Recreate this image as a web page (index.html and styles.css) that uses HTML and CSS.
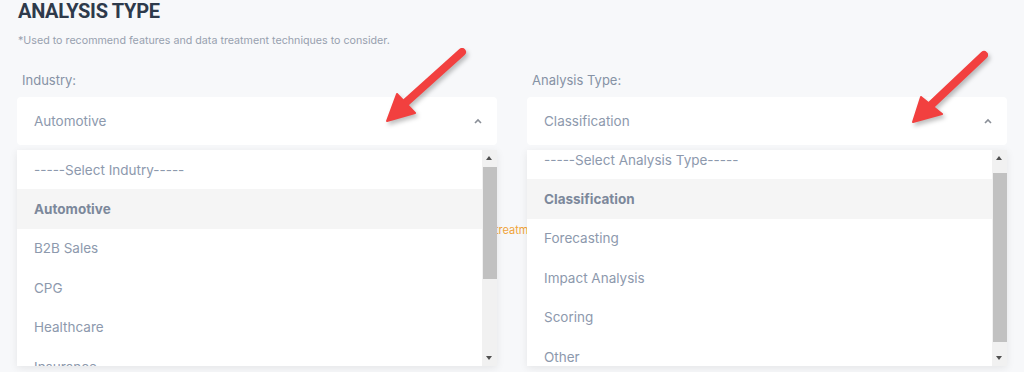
FILE: index.html
```html
<!DOCTYPE html>
<html>
<head>
  <meta charset="UTF-8">
  <title>Analysis Type</title>
  <link rel="stylesheet" href="styles.css">
</head>
<body>
  <section class="panel">
    <h2 class="panel-title">ANALYSIS TYPE</h2>
    <p class="hint">*Used to recommend features and data treatment techniques to consider.</p>

    <div class="fields">
      <div class="field">
        <label class="field-label">Industry:</label>
        <div class="select">
          <span>Automotive</span>
          <svg class="caret" width="8" height="6" viewBox="0 0 8 6"><path d="M1 5 L4 2 L7 5" fill="none" stroke="#8a8f98" stroke-width="1.6"/></svg>
        </div>
        <div class="menu">
          <ul class="options">
            <li>-----Select Indutry-----</li>
            <li class="selected">Automotive</li>
            <li>B2B Sales</li>
            <li>CPG</li>
            <li>Healthcare</li>
            <li>Insurance</li>
          </ul>
          <div class="scrollbar">
            <span class="arrow-up"></span>
            <span class="thumb thumb-industry"></span>
            <span class="arrow-down"></span>
          </div>
        </div>
      </div>

      <div class="field">
        <label class="field-label">Analysis Type:</label>
        <div class="select">
          <span>Classification</span>
          <svg class="caret" width="8" height="6" viewBox="0 0 8 6"><path d="M1 5 L4 2 L7 5" fill="none" stroke="#8a8f98" stroke-width="1.6"/></svg>
        </div>
        <div class="menu">
          <ul class="options scrolled">
            <li>-----Select Analysis Type-----</li>
            <li class="selected">Classification</li>
            <li>Forecasting</li>
            <li>Impact Analysis</li>
            <li>Scoring</li>
            <li>Other</li>
          </ul>
          <div class="scrollbar">
            <span class="arrow-up"></span>
            <span class="thumb thumb-type"></span>
            <span class="arrow-down"></span>
          </div>
        </div>
      </div>
    </div>

    <p class="note">treatment techniques will be suggested</p>

    <svg class="callouts" width="1024" height="372" viewBox="0 0 1024 372">
      <g fill="#f2403f" stroke="#f2403f">
        <line x1="462" y1="52" x2="403" y2="105" stroke-width="8" stroke-linecap="round"/>
        <polygon points="387,121 397,94 415,113" stroke-width="2" stroke-linejoin="round"/>
        <line x1="984" y1="55" x2="930" y2="106" stroke-width="8" stroke-linecap="round"/>
        <polygon points="913,122 921,97 942,114" stroke-width="2" stroke-linejoin="round"/>
      </g>
    </svg>
  </section>
</body>
</html>
```

FILE: styles.css
```css
body {
  margin: 0;
  background-color: #f7f8fa;
  font-family: "Inter", "Noto Sans", sans-serif;
  color: #8d99ad;
}
.panel {
  position: relative;
  height: 372px;
  overflow: hidden;
  padding: 0 17px;
}
.panel-title {
  margin: 0;
  padding-left: 1px;
  font-family: "Roboto", "Inter", sans-serif;
  font-size: 20px;
  line-height: 22px;
  font-weight: 700;
  letter-spacing: -0.3px;
  color: #2e3a4b;
}
.hint {
  margin: 12px 0 0 1px;
  font-size: 10.7px;
  line-height: 13px;
  color: #97a1af;
}
.fields {
  display: flex;
  gap: 30px;
  margin-top: 24px;
}
.field {
  position: relative;
  flex: 1;
}
.field-label {
  display: block;
  padding-left: 5px;
  font-size: 13px;
  line-height: 18px;
  color: #8692a5;
  margin-bottom: 8px;
}
.select {
  display: flex;
  align-items: center;
  justify-content: space-between;
  height: 48px;
  padding: 0 17px;
  background-color: #ffffff;
  border-radius: 4px;
  font-size: 13.5px;
  color: #8d99ad;
}
.caret {
  margin-right: -2px;
}
.menu {
  position: absolute;
  top: 100%;
  left: 0;
  right: 0;
  margin-top: 5px;
  height: 216px;
  display: flex;
  background-color: #ffffff;
  overflow: hidden;
  box-shadow: 0 2px 8px rgba(0, 0, 0, 0.08);
  z-index: 5;
}
.options {
  flex: 1;
  margin: 0;
  padding: 0;
  list-style: none;
}
.options.scrolled {
  margin-top: -10px;
}
.options li {
  height: 39.4px;
  display: flex;
  align-items: center;
  padding-left: 17px;
  font-size: 13.5px;
  color: #8d99ad;
}
.options li.selected {
  background-color: #f5f5f5;
  font-weight: 700;
  color: #7c889b;
}
.scrollbar {
  position: relative;
  width: 15px;
  background-color: #f1f1f1;
}
.arrow-up,
.arrow-down {
  position: absolute;
  left: 4px;
  width: 0;
  height: 0;
  border-left: 3.5px solid transparent;
  border-right: 3.5px solid transparent;
}
.arrow-up {
  top: 6px;
  border-bottom: 4px solid #505050;
}
.arrow-down {
  bottom: 6px;
  border-top: 4px solid #505050;
}
.thumb {
  position: absolute;
  left: 1px;
  right: 0;
  background-color: #c1c1c1;
}
.thumb-industry {
  top: 17px;
  height: 112px;
}
.thumb-type {
  top: 23px;
  height: 169px;
}
.note {
  margin: 78px 0 0 478px;
  font-size: 11px;
  color: #f0a43a;
  white-space: nowrap;
}
.callouts {
  position: absolute;
  top: 0;
  left: 0;
  z-index: 10;
  filter: drop-shadow(2px 3px 2px rgba(0, 0, 0, 0.25));
}
```
